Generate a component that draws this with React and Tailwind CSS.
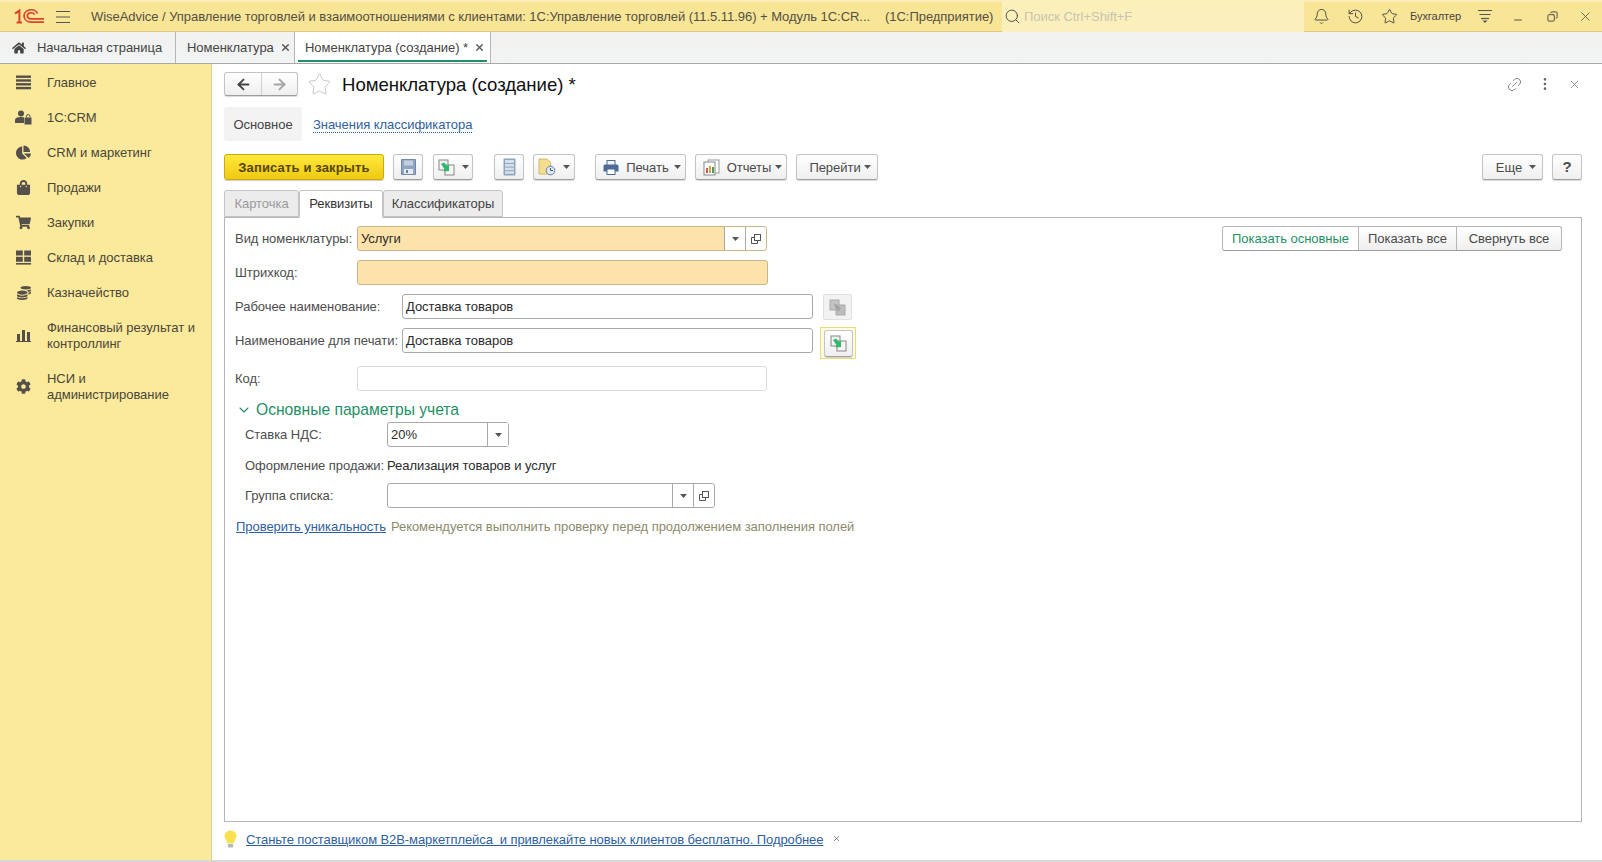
import React from 'react';
import { Bell, History, Star, Link2, EllipsisVertical, X, Search, ChevronDown, ArrowLeft, ArrowRight, Minus, Copy } from 'lucide-react';
import { FaHome, FaChartPie, FaShoppingBag, FaShoppingCart, FaCog, FaCoins } from 'react-icons/fa';

// ---- small drawings ----
const Logo = () => (
    <svg width="30" height="15" viewBox="0 0 30 15" fill="none" stroke="#d8452c">
        <path d="M1 4.6L5.4 1.6V13.6M2.6 13.6H8" strokeWidth="2" />
        <path d="M23.5 4.5A7 6.2 0 1 0 17 13.2H30" strokeWidth="1.7" />
        <path d="M20.6 5.6A3.8 3 0 1 0 17 9.8H30" strokeWidth="1.7" />
    </svg>
);

const Hamburger = () => (
    <svg width="16" height="14" viewBox="0 0 16 14" stroke="#555" strokeWidth="1.1">
        <path d="M1 1.5H15M1 7H15M1 12.5H15" />
    </svg>
);

const MenuIcon = () => (
    <svg width="15" height="15" viewBox="0 0 15 15" fill="#55504a">
        <rect y="0.5" width="15" height="2.4" /><rect y="4.3" width="15" height="2.4" /><rect y="8.1" width="15" height="2.4" /><rect y="11.9" width="15" height="2.4" />
    </svg>
);

const CrmIcon = () => (
    <svg width="17" height="15" viewBox="0 0 17 15" fill="#55504a">
        <circle cx="6" cy="3.4" r="3" />
        <path d="M0 13V10C0 8 2 7 6 7C7.5 7 8.5 7.2 9 7.5V13Z" />
        <path d="M10 7.5H16.5V14.5H9.5V8Z" />
        <path d="M11.5 7.5V6.2A1.7 1.7 0 0 1 14.9 6.2V7.5" fill="none" stroke="#55504a" strokeWidth="1" />
    </svg>
);

const GridIcon = () => (
    <svg width="15" height="15" viewBox="0 0 15 15" fill="#55504a">
        <rect x="0" y="0.5" width="6.8" height="5" /><rect x="8.2" y="0.5" width="6.8" height="5" />
        <rect x="0" y="6.8" width="6.8" height="5" /><rect x="8.2" y="6.8" width="6.8" height="5" />
        <rect x="0" y="13" width="15" height="1.6" />
    </svg>
);

const BarsIcon = () => (
    <svg width="15" height="13" viewBox="0 0 15 13" fill="#55504a">
        <rect x="1" y="5" width="3" height="7" /><rect x="6" y="1" width="3" height="11" /><rect x="11" y="3" width="3" height="9" />
        <rect x="0" y="12" width="15" height="1" />
    </svg>
);

const FloppyIcon = () => (
    <svg width="15" height="16" viewBox="0 0 15 16">
        <path d="M0.5 0.5H14.5V15.5H0.5Z" fill="#8fa5c4" stroke="#7289aa" />
        <rect x="3" y="1.5" width="9" height="5" fill="#c3d0e2" />
        <rect x="3" y="10" width="9" height="5" fill="#e6ebf2" />
        <rect x="5" y="11" width="2" height="3" fill="#6b7f9c" />
    </svg>
);

const CopyGreenIcon = ({ muted }) => (
    <svg width="17" height="17" viewBox="0 0 17 17">
        <rect x="1" y="1" width="9" height="10" fill={muted ? '#c4c4c4' : '#f3f3f3'} stroke={muted ? '#aaa' : '#888'} />
        <rect x="7" y="6" width="9" height="10" fill={muted ? '#bdbdbd' : '#f5f5f5'} stroke={muted ? '#aaa' : '#888'} />
        {muted ? <path d="M4 4L12 9L9 13Z" fill="#a3a3a3" /> : <path d="M3 5L6 3.5L8.5 6.5L11 6V12L5.5 12.5L6.5 10Z" fill="#2cb96c" />}
    </svg>
);

const ListIcon = () => (
    <svg width="13" height="18" viewBox="0 0 13 18">
        <rect x="0.5" y="0.5" width="12" height="17" rx="1" fill="#8fa5bd" />
        <rect x="2" y="2" width="9" height="3" fill="#d6e0ea" />
        <rect x="2" y="6" width="9" height="2.6" fill="#d6e0ea" />
        <rect x="2" y="9.6" width="9" height="2.6" fill="#d6e0ea" />
        <rect x="2" y="13.2" width="9" height="2.6" fill="#d6e0ea" />
    </svg>
);

const DocClockIcon = () => (
    <svg width="18" height="18" viewBox="0 0 18 18">
        <path d="M1 1H9L12.5 4.5V16H1Z" fill="#f4dd8e" stroke="#d2b867" />
        <circle cx="12.5" cy="12.5" r="4.3" fill="#dfe7f1" stroke="#6582a8" />
        <path d="M12.5 10V12.5H15" stroke="#44597a" fill="none" />
    </svg>
);

const PrinterIcon = () => (
    <svg width="16" height="15" viewBox="0 0 16 15">
        <rect x="4" y="0.5" width="8" height="5" fill="#f2f2f2" stroke="#4d6b93" />
        <path d="M0.5 6A1.5 1.5 0 0 1 2 4.5H14A1.5 1.5 0 0 1 15.5 6V11.5H0.5Z" fill="#4d6b93" />
        <rect x="4" y="9" width="8" height="5.5" fill="#fff" stroke="#4d6b93" />
    </svg>
);

const ReportIcon = () => (
    <svg width="17" height="17" viewBox="0 0 17 17">
        <rect x="5" y="1" width="11" height="13" fill="#fff" stroke="#999" />
        <rect x="1" y="3" width="11" height="13" fill="#fff" stroke="#888" />
        <rect x="3" y="9" width="2" height="5" fill="#d9534f" /><rect x="6" y="7" width="2" height="7" fill="#d9a441" /><rect x="9" y="8" width="2" height="6" fill="#4a9e5c" />
    </svg>
);

const OpenIcon = () => (
    <svg width="12" height="12" viewBox="0 0 12 12" fill="none" stroke="#555">
        <rect x="4.5" y="1.5" width="6" height="6" />
        <path d="M4 4.5H1.5V10.5H7.5V8" />
    </svg>
);

const Caret = ({ color = '#555' }) => (
    <svg width="7" height="4" viewBox="0 0 7 4" fill={color}><path d="M0 0H7L3.5 4Z" /></svg>
);

const FilterIcon = () => (
    <svg width="16" height="15" viewBox="0 0 16 15" stroke="#555" fill="#555">
        <path d="M1 1.5H15M2.5 5.5H13.5" fill="none" strokeWidth="1.2" />
        <path d="M4 9.5H12" fill="none" strokeWidth="1.2" />
        <path d="M5.5 11.5H10.5L8 14Z" stroke="none" />
    </svg>
);

const BulbIcon = () => (
    <svg width="13" height="19" viewBox="0 0 13 19">
        <path d="M6.5 0.5C10 0.5 12.5 3 12.5 6C12.5 9 10 10.5 9.5 13.5H3.5C3 10.5 0.5 9 0.5 6C0.5 3 3 0.5 6.5 0.5Z" fill="#f8e04e" />
        <rect x="3.8" y="14" width="5.4" height="3.5" rx="1" fill="#b9b9b9" />
    </svg>
);

// ---- reusable controls ----
const ToolButton = ({ children, className = '' }) => (
    <button className={`h-[26px] flex items-center justify-center gap-[7px] rounded-[3px] border border-[#c4c4c4] border-b-[#9d9d9d] bg-linear-to-b from-white to-[#efefef] shadow-[0_1px_1px_rgba(0,0,0,0.15)] text-[#4a4a4a] ${className}`}>
        {children}
    </button>
);

const Label = ({ children, className = '' }) => (
    <span className={`text-[#4d4d4d] shrink-0 ${className}`}>{children}</span>
);

const TextBox = ({ value, tint, muted, className = '', extras }) => (
    <div className={`h-[25px] shrink-0 flex rounded-[3px] border ${muted ? 'border-[#dcdcdc]' : tint ? 'border-[#c9b58a]' : 'border-[#a9a9a9]'} ${tint ? 'bg-[#fde3ab]' : 'bg-white'} ${className}`}>
        <span className="flex-1 pl-[3px] leading-[23px] text-[#2a2a2a]">{value}</span>
        {extras}
    </div>
);

const Dropdown = () => (
    <span className="w-[21px] flex items-center justify-center border-l border-[#a9a9a9] bg-white"><Caret color="#555" /></span>
);

const OpenBtn = () => (
    <span className="w-[21px] flex items-center justify-center border-l border-[#a9a9a9] bg-white rounded-r-[3px]"><OpenIcon /></span>
);

const menu = [
    { icon: <MenuIcon />, label: 'Главное' },
    { icon: <CrmIcon />, label: '1С:CRM' },
    { icon: <FaChartPie size={15} color="#55504a" />, label: 'CRM и маркетинг' },
    { icon: <FaShoppingBag size={15} color="#55504a" />, label: 'Продажи' },
    { icon: <FaShoppingCart size={15} color="#55504a" />, label: 'Закупки' },
    { icon: <GridIcon />, label: 'Склад и доставка' },
    { icon: <FaCoins size={14} color="#55504a" />, label: 'Казначейство' },
];

const menuTall = [
    { icon: <BarsIcon />, lines: ['Финансовый результат и', 'контроллинг'] },
    { icon: <FaCog size={15} color="#55504a" />, lines: ['НСИ и', 'администрирование'] },
];

export default function App() {
    return (
        <div className="w-[1602px] h-[862px] flex flex-col overflow-hidden bg-white border-b-2 border-[#d8d8d8] text-[13px] tracking-[-0.04px] text-[#333] font-['Liberation_Sans',Arial,sans-serif]">

            {/* Title bar */}
            <header className="h-[32px] shrink-0 flex items-center bg-[#f8e596] border-b border-[#dccb85] border-t-2 border-t-[#fbeeb8]">
                <span className="ml-[14px] w-[41px]"><Logo /></span>
                <Hamburger />
                <span className="ml-[20px] w-[794px] text-[#555044] whitespace-nowrap">
                    WiseAdvice / Управление торговлей и взаимоотношениями с клиентами: 1С:Управление торговлей (11.5.11.96) + Модуль 1С:CR...
                </span>
                <span className="w-[107px] text-[#555044] whitespace-nowrap">(1С:Предприятие)</span>
                <div className="ml-[10px] w-[302px] h-[30px] flex items-center gap-[3px] bg-[#fbf0bc] pl-[2px] text-[#c9c4b0]">
                    <Search size={17} color="#444" strokeWidth={1.3} />
                    <span>Поиск Ctrl+Shift+F</span>
                </div>
                <Bell size={17} color="#444" strokeWidth={1.3} className="ml-[9px]" />
                <History size={17} color="#444" strokeWidth={1.3} className="ml-[17px]" />
                <Star size={17} color="#444" strokeWidth={1.3} className="ml-[17px]" />
                <span className="ml-[12px] text-[11px] text-[#444] whitespace-nowrap">Бухгалтер</span>
                <span className="ml-[16px]"><FilterIcon /></span>
                <Minus size={12} color="#555" className="ml-[19px] mt-[6px]" />
                <Copy size={11} color="#444" className="ml-[23px] -scale-x-100" />
                <X size={15} color="#444" strokeWidth={1.2} className="ml-[20px]" />
            </header>

            {/* Open tabs */}
            <nav className="h-[32px] shrink-0 flex bg-linear-to-b from-[#f2f1ef] to-[#f1f3f4] border-b border-[#a8a8a8]">
                <div className="w-[176px] flex items-center border-r border-[#b5b5b5] text-[#444] whitespace-nowrap">
                    <FaHome size={14} color="#444" className="ml-[12px]" />
                    <span className="ml-[11px]">Начальная страница</span>
                </div>
                <div className="w-[119px] flex items-center border-r border-[#b5b5b5] pl-[11px] text-[#444] whitespace-nowrap">
                    <span>Номенклатура</span>
                    <X size={11} strokeWidth={3} color="#555" className="ml-[6px]" />
                </div>
                <div className="relative w-[196px] flex items-center border-r border-[#b5b5b5] pl-[10px] bg-white text-[#444] whitespace-nowrap">
                    <span>Номенклатура (создание) *</span>
                    <X size={11} strokeWidth={3} color="#555" className="ml-[6px]" />
                    <span className="absolute left-[3px] right-[3px] bottom-[1px] h-[2px] bg-[#1f8f66]" />
                </div>
            </nav>

            <div className="flex-1 flex min-h-0">
                {/* Section menu */}
                <aside className="w-[212px] shrink-0 bg-[#fbe99c] border-r border-[#d9cf9f] pt-[1px] text-[#4a4638]">
                    {menu.map((m) => (
                        <div key={m.label} className="h-[35px] flex items-center">
                            <span className="w-[47px] flex justify-center">{m.icon}</span>
                            <span>{m.label}</span>
                        </div>
                    ))}
                    {menuTall.map((m, i) => (
                        <div key={i} className="h-[51px] flex items-center">
                            <span className="w-[47px] flex justify-center">{m.icon}</span>
                            <span className="leading-[16px]">{m.lines[0]}<br />{m.lines[1]}</span>
                        </div>
                    ))}
                </aside>

                {/* Form */}
                <main className="flex-1 min-w-0 flex flex-col pl-[12px] pr-[20px]">
                    <div className="h-[40px] mb-[3px] shrink-0 flex items-center">
                        <div className="w-[74px] h-[24px] flex rounded-[3px] border border-[#c4c4c4] border-b-[#9d9d9d] bg-linear-to-b from-white to-[#efefef] shadow-[0_1px_1px_rgba(0,0,0,0.15)]">
                            <span className="w-[37px] flex items-center justify-center border-r border-[#d0d0d0]"><ArrowLeft size={17} strokeWidth={2.6} color="#444" /></span>
                            <span className="flex-1 flex items-center justify-center"><ArrowRight size={17} strokeWidth={2.6} color="#a5a5a5" /></span>
                        </div>
                        <Star size={25} strokeWidth={0.8} color="#bdbdbd" className="ml-[9px]" />
                        <h1 className="ml-[10px] mt-[1px] text-[18.6px] text-[#111]">Номенклатура (создание) *</h1>
                        <div className="ml-auto mr-[1px] flex items-center text-[#666]">
                            <Link2 size={17} strokeWidth={1.2} color="#777" className="-rotate-45" />
                            <EllipsisVertical size={16} strokeWidth={2} color="#666" className="ml-[14px]" />
                            <X size={13} strokeWidth={1.2} color="#666" className="ml-[15px]" />
                        </div>
                    </div>

                    <div className="h-[34px] shrink-0 flex items-center">
                        <span className="h-[34px] w-[78px] flex items-center justify-center rounded-[3px] bg-[#f3f3f3] pt-[1px] text-[#444]">Основное</span>
                        <a className="ml-[11px] mt-[1px] text-[#2f5f9e] border-b border-dotted border-[#2f5f9e] leading-[15px]">Значения классификатора</a>
                    </div>

                    <div className="shrink-0 mt-[13px] flex items-center">
                        <button className="w-[160px] h-[26px] pt-[1px] rounded-[3px] border border-[#c9a90e] bg-linear-to-b from-[#ffe93a] to-[#efc90c] font-bold tracking-[0.15px] text-[#564700] shadow-[0_1px_1px_rgba(0,0,0,0.2)]">Записать и закрыть</button>
                        <ToolButton className="ml-[9px] w-[30px]"><FloppyIcon /></ToolButton>
                        <ToolButton className="ml-[10px] w-[40px]"><CopyGreenIcon /><Caret /></ToolButton>
                        <ToolButton className="ml-[21px] w-[30px]"><ListIcon /></ToolButton>
                        <ToolButton className="ml-[9px] w-[42px]"><DocClockIcon /><Caret /></ToolButton>
                        <ToolButton className="ml-[20px] w-[91px] pl-[3px]"><PrinterIcon /><span className="-mr-[2px] pt-[1px]">Печать</span><Caret /></ToolButton>
                        <ToolButton className="ml-[9px] w-[92px] pl-[3px]"><ReportIcon /><span className="-mr-[3px] pt-[1px]">Отчеты</span><Caret /></ToolButton>
                        <ToolButton className="ml-[9px] w-[82px] pl-[6px]"><span className="-mr-[4px] pt-[1px]">Перейти</span><Caret /></ToolButton>
                        <ToolButton className="ml-auto w-[61px] pl-[7px]"><span className="pt-[1px]">Еще</span><Caret /></ToolButton>
                        <ToolButton className="ml-[9px] w-[30px] font-bold text-[15px]">?</ToolButton>
                    </div>

                    {/* Page tabs */}
                    <div className="shrink-0 mt-[10px] h-[27px] flex relative z-10">
                        <span className="w-[75px] flex items-center justify-center rounded-t-[3px] border border-[#c4c4c4] bg-[#ececec] text-[#9a9a9a]">Карточка</span>
                        <span className="w-[84px] flex items-center justify-center rounded-t-[3px] border border-[#c4c4c4] border-b-white bg-white text-[#333] h-[28px]">Реквизиты</span>
                        <span className="w-[120px] flex items-center justify-center rounded-t-[3px] border border-[#c4c4c4] bg-[#ececec] text-[#444]">Классификаторы</span>
                    </div>

                    <section className="flex-1 min-h-0 border border-[#b5b5b5] pl-[10px] pr-[19px] pt-[8px]">
                        <div className="flex items-center">
                            <Label className="w-[122px]">Вид номенклатуры:</Label>
                            <TextBox value="Услуги" tint className="w-[410px]" extras={<><Dropdown /><OpenBtn /></>} />
                            <div className="ml-auto h-[25px] flex rounded-[3px] border border-[#b5b5b5] border-b-[#9d9d9d] bg-linear-to-b from-white to-[#efefef] text-[#4a4a4a]">
                                <span className="w-[135px] flex items-center justify-center rounded-l-[3px] bg-white text-[#1f8f66]">Показать основные</span>
                                <span className="w-[98px] flex items-center justify-center border-l border-[#b5b5b5]">Показать все</span>
                                <span className="w-[105px] flex items-center justify-center border-l border-[#b5b5b5]">Свернуть все</span>
                            </div>
                        </div>
                        <div className="mt-[9px] flex items-center">
                            <Label className="w-[122px]">Штрихкод:</Label>
                            <TextBox tint className="w-[411px]" />
                        </div>
                        <div className="mt-[9px] h-[25px] flex">
                            <Label className="w-[167px] leading-[25px]">Рабочее наименование:</Label>
                            <TextBox value="Доставка товаров" className="w-[411px]" />
                            <button className="ml-[10px] w-[29px] h-[26px] shrink-0 flex items-center justify-center rounded-[2px] border border-[#e0e0e0] bg-[#f2f2f2]"><CopyGreenIcon muted /></button>
                        </div>
                        <div className="mt-[9px] h-[25px] flex">
                            <Label className="w-[167px] leading-[25px]">Наименование для печати:</Label>
                            <TextBox value="Доставка товаров" className="w-[411px]" />
                            <div className="ml-[7px] -mt-[1px] w-[36px] h-[32px] shrink-0 flex items-center justify-center border border-[#e6dc7a] bg-[#fdfbe4]">
                                <ToolButton className="w-[29px] h-[27px]"><CopyGreenIcon /></ToolButton>
                            </div>
                        </div>
                        <div className="mt-[13px] flex items-center">
                            <Label className="w-[122px]">Код:</Label>
                            <TextBox muted className="w-[410px]" />
                        </div>
                        <div className="mt-[8px] h-[22px] flex items-center text-[15.7px] text-[#1f8f66]">
                            <ChevronDown size={16} strokeWidth={1.6} className="ml-[1px]" />
                            <span className="ml-[4px]">Основные параметры учета</span>
                        </div>
                        <div className="pl-[10px]">
                            <div className="mt-[1px] flex items-center">
                                <Label className="w-[142px]">Ставка НДС:</Label>
                                <TextBox value="20%" className="w-[122px]" extras={<Dropdown />} />
                            </div>
                            <div className="mt-[10px] h-[18px] flex items-center">
                                <Label className="w-[142px]">Оформление продажи:</Label>
                                <span className="text-[#2a2a2a]">Реализация товаров и услуг</span>
                            </div>
                            <div className="mt-[8px] flex items-center">
                                <Label className="w-[142px]">Группа списка:</Label>
                                <TextBox className="w-[328px]" extras={<><Dropdown /><OpenBtn /></>} />
                            </div>
                        </div>
                        <div className="mt-[9px] pl-[1px] flex items-center gap-[5px]">
                            <a className="text-[#2f5f9e] underline">Проверить уникальность</a>
                            <span className="text-[#8c8a6c]">Рекомендуется выполнить проверку перед продолжением заполнения полей</span>
                        </div>
                    </section>

                    <footer className="h-[38px] shrink-0 flex items-center pb-[3px]">
                        <BulbIcon />
                        <a className="ml-[9px] tracking-[-0.09px] text-[#2f5f9e] underline whitespace-pre">Станьте поставщиком B2B-маркетплейса  и привлекайте новых клиентов бесплатно. Подробнее</a>
                        <X size={9} strokeWidth={2} color="#666" className="ml-[9px] mb-[3px]" />
                    </footer>
                </main>
            </div>
        </div>
    );
}
